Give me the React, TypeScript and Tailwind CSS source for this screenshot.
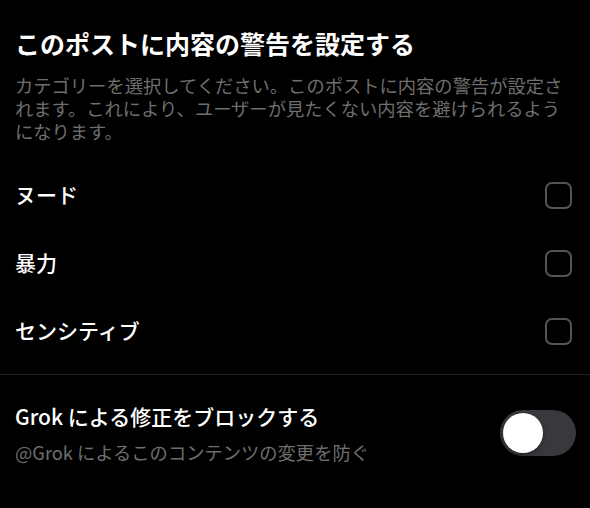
import { useState } from "react";

const categories = ["ヌード", "暴力", "センシティブ"];

const font = { fontFamily: '"Noto Sans CJK JP", "Noto Sans", sans-serif' };

function Checkbox({ checked, onChange }: { checked: boolean; onChange: () => void }) {
  return (
    <button
      type="button"
      onClick={onChange}
      className={`h-[27px] w-[27px] rounded-[7px] border-2 ${
        checked ? "border-[#1d9bf0] bg-[#1d9bf0]" : "border-[#545454] bg-transparent"
      }`}
    />
  );
}

function Toggle({ on, onChange }: { on: boolean; onChange: () => void }) {
  return (
    <button
      type="button"
      onClick={onChange}
      className={`flex h-[46px] w-[76px] items-center rounded-full px-[3px] ${
        on ? "justify-end bg-[#1d9bf0]" : "justify-start bg-[#39393d]"
      }`}
    >
      <span className="h-[40px] w-[40px] rounded-full bg-white shadow-[0_2px_4px_rgba(0,0,0,0.4)]" />
    </button>
  );
}

export default function App() {
  const [selected, setSelected] = useState<string[]>([]);
  const [blockGrok, setBlockGrok] = useState(false);

  const toggleCategory = (name: string) =>
    setSelected((prev) => (prev.includes(name) ? prev.filter((c) => c !== name) : [...prev, name]));

  return (
    <div className="h-[508px] w-[590px] overflow-hidden bg-black text-white" style={font}>
      <div className="px-[15px] pt-[26px]">
        <h1 className="text-[25px] font-bold leading-[34px]">このポストに内容の警告を設定する</h1>
        <p className="mt-[14px] max-w-[556px] text-[18.3px] leading-[23px] text-[#6e6e6e]">
          カテゴリーを選択してください。このポストに内容の警告が設定されます。これにより、ユーザーが見たくない内容を避けられるようになります。
        </p>
      </div>

      <div className="mt-[18px]">
        {categories.map((name) => (
          <div key={name} className="flex h-[68px] items-center justify-between pl-[15px] pr-[18px]">
            <span className="text-[21px] font-medium">{name}</span>
            <Checkbox checked={selected.includes(name)} onChange={() => toggleCategory(name)} />
          </div>
        ))}
      </div>

      <div className="mt-[9px] border-t border-[#222]" />

      <div className="flex items-center justify-between pl-[15px] pr-[14px] pt-[26px]">
        <div className="flex flex-col">
          <span className="text-[21px] font-medium leading-[30px]">Grok による修正をブロックする</span>
          <span className="mt-[9px] text-[18.3px] leading-[24px] text-[#6e6e6e]">
            @Grok によるこのコンテンツの変更を防ぐ
          </span>
        </div>
        <Toggle on={blockGrok} onChange={() => setBlockGrok((v) => !v)} />
      </div>
    </div>
  );
}
